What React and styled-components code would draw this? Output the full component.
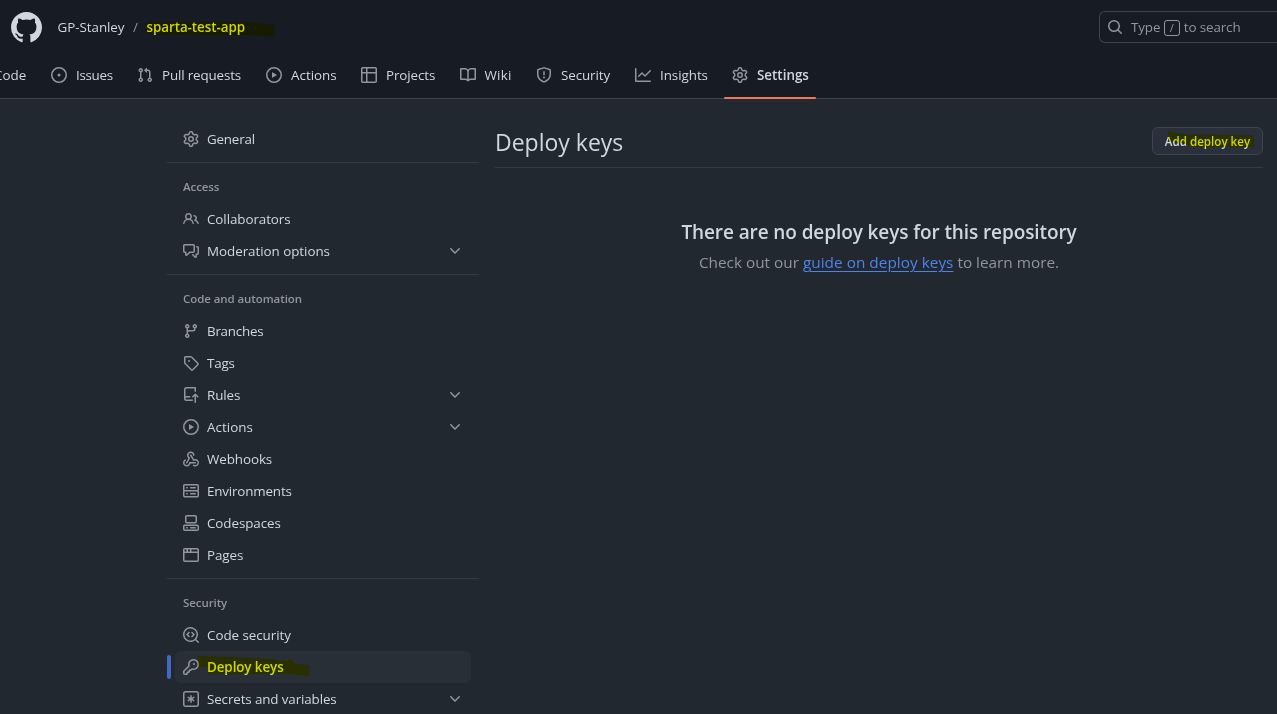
import React from 'react';
import styled, { createGlobalStyle, css } from 'styled-components';

const c = {
  header: '#171b23',
  page: '#212830',
  line: '#3d444d',
  lineMuted: '#343b44',
  text: '#d1d7e0',
  muted: '#9095a0',
  link: '#4f83ea',
  bar: '#4069c6',
  button: '#2a303b',
  active: '#292f37',
  underline: '#ec775c',
};

const Global = createGlobalStyle`
  *, *::before, *::after { box-sizing: border-box; }
  html, body { margin: 0; height: 100%; overflow: hidden; background: ${c.page}; }
  body {
    color: ${c.text};
    font-family: "Open Sans", "Noto Sans", sans-serif;
    font-size: 13.4px;
    line-height: 20px;
  }
  a { color: inherit; text-decoration: none; }
`;

const paths = {
  mark: 'M8 0c4.42 0 8 3.58 8 8a8.013 8.013 0 0 1-5.45 7.59c-.4.08-.55-.17-.55-.38 0-.27.01-1.13.01-2.2 0-.75-.25-1.23-.54-1.48 1.78-.2 3.65-.88 3.65-3.95 0-.88-.31-1.59-.82-2.15.08-.2.36-1.02-.08-2.12 0 0-.67-.22-2.2.82-.64-.18-1.32-.27-2-.27-.68 0-1.36.09-2 .27-1.53-1.03-2.2-.82-2.2-.82-.44 1.1-.16 1.92-.08 2.12-.51.56-.82 1.28-.82 2.15 0 3.06 1.86 3.75 3.64 3.95-.23.2-.44.55-.51 1.07-.46.21-1.61.55-2.33-.66-.15-.24-.6-.83-1.23-.82-.67.01-.27.38.01.53.34.19.73.9.82 1.13.16.45.68 1.31 2.69.94 0 .67.01 1.3.01 1.49 0 .21-.15.45-.55.38A7.995 7.995 0 0 1 0 8c0-4.42 3.58-8 8-8Z',
  search: 'M10.68 11.74a6 6 0 0 1-7.922-8.982 6 6 0 0 1 8.982 7.922l3.04 3.04a.749.749 0 0 1-.326 1.275.749.749 0 0 1-.734-.215ZM11.5 7a4.499 4.499 0 1 0-8.997 0A4.499 4.499 0 0 0 11.5 7Z',
  issue: 'M8 9.5a1.5 1.5 0 1 0 0-3 1.5 1.5 0 0 0 0 3ZM8 0a8 8 0 1 1 0 16A8 8 0 0 1 8 0ZM1.5 8a6.5 6.5 0 1 0 13 0 6.5 6.5 0 0 0-13 0Z',
  pull: 'M1.5 3.25a2.25 2.25 0 1 1 3 2.122v5.256a2.251 2.251 0 1 1-1.5 0V5.372A2.25 2.25 0 0 1 1.5 3.25Zm5.677-.177L9.573.677A.25.25 0 0 1 10 .854V2.5h1A2.5 2.5 0 0 1 13.5 5v5.628a2.251 2.251 0 1 1-1.5 0V5a1 1 0 0 0-1-1h-1v1.646a.25.25 0 0 1-.427.177L7.177 3.427a.25.25 0 0 1 0-.354ZM3.75 2.5a.75.75 0 1 0 0 1.5.75.75 0 0 0 0-1.5Zm0 9.5a.75.75 0 1 0 0 1.5.75.75 0 0 0 0-1.5Zm8.25.75a.75.75 0 1 0 1.5 0 .75.75 0 0 0-1.5 0Z',
  play: 'M8 0a8 8 0 1 1 0 16A8 8 0 0 1 8 0ZM1.5 8a6.5 6.5 0 1 0 13 0 6.5 6.5 0 0 0-13 0Zm4.879-2.773 4.264 2.559a.25.25 0 0 1 0 .428l-4.264 2.559A.25.25 0 0 1 6 10.559V5.442a.25.25 0 0 1 .379-.215Z',
  table: 'M0 1.75C0 .784.784 0 1.75 0h12.5C15.216 0 16 .784 16 1.75v12.5A1.75 1.75 0 0 1 14.25 16H1.75A1.75 1.75 0 0 1 0 14.25ZM6.5 6.5v8h7.75a.25.25 0 0 0 .25-.25V6.5Zm8-1.5V1.75a.25.25 0 0 0-.25-.25H6.5V5Zm-13 1.5v7.75c0 .138.112.25.25.25H5v-8ZM5 5V1.5H1.75a.25.25 0 0 0-.25.25V5Z',
  book: 'M0 1.75A.75.75 0 0 1 .75 1h4.253c1.227 0 2.317.59 3 1.501A3.743 3.743 0 0 1 11.006 1h4.245a.75.75 0 0 1 .75.75v10.5a.75.75 0 0 1-.75.75h-4.507a2.25 2.25 0 0 0-1.591.659l-.622.621a.75.75 0 0 1-1.06 0l-.622-.621A2.25 2.25 0 0 0 5.258 13H.75a.75.75 0 0 1-.75-.75Zm7.251 10.324.004-5.073-.002-2.253A2.25 2.25 0 0 0 5.003 2.5H1.5v9h3.757a3.75 3.75 0 0 1 1.994.574ZM8.755 4.75l-.004 7.322a3.752 3.752 0 0 1 1.992-.572H14.5v-9h-3.495a2.25 2.25 0 0 0-2.25 2.25Z',
  shield: 'M7.467.133a1.748 1.748 0 0 1 1.066 0l5.25 1.68A1.75 1.75 0 0 1 15 3.48V7c0 1.566-.32 3.182-1.303 4.682-.983 1.498-2.585 2.813-5.032 3.855a1.697 1.697 0 0 1-1.33 0c-2.447-1.042-4.049-2.357-5.032-3.855C1.32 10.182 1 8.566 1 7V3.48a1.75 1.75 0 0 1 1.217-1.667Zm.61 1.429a.25.25 0 0 0-.153 0l-5.25 1.68a.25.25 0 0 0-.174.238V7c0 1.358.275 2.666 1.057 3.86.784 1.194 2.121 2.34 4.366 3.297a.196.196 0 0 0 .154 0c2.245-.956 3.582-2.104 4.366-3.298C13.225 9.666 13.5 8.36 13.5 7V3.48a.251.251 0 0 0-.174-.237l-5.25-1.68ZM8.75 4.75v3a.75.75 0 0 1-1.5 0v-3a.75.75 0 0 1 1.5 0ZM9 10.5a1 1 0 1 1-2 0 1 1 0 0 1 2 0Z',
  graph: 'M1.5 1.75V13.5h13.75a.75.75 0 0 1 0 1.5H.75a.75.75 0 0 1-.75-.75V1.75a.75.75 0 0 1 1.5 0Zm14.28 2.53-5.25 5.25a.75.75 0 0 1-1.06 0L7 7.06 4.28 9.78a.751.751 0 0 1-1.042-.018.751.751 0 0 1-.018-1.042l3.25-3.25a.75.75 0 0 1 1.06 0L10 7.94l4.72-4.72a.751.751 0 0 1 1.042.018.751.751 0 0 1 .018 1.042Z',
  gear: 'M8 0a8.2 8.2 0 0 1 .701.031C9.444.095 9.99.645 10.16 1.29l.288 1.107c.018.066.079.158.212.224.231.114.454.243.668.386.123.082.233.09.299.071l1.103-.303c.644-.176 1.392.021 1.82.63.27.385.506.792.704 1.218.315.675.111 1.422-.364 1.891l-.814.806c-.049.048-.098.147-.088.294.016.257.016.515 0 .772-.01.147.038.246.088.294l.814.806c.475.469.679 1.216.364 1.891a7.977 7.977 0 0 1-.704 1.217c-.428.61-1.176.807-1.82.63l-1.102-.302c-.067-.019-.177-.011-.3.071a5.909 5.909 0 0 1-.668.386c-.133.066-.194.158-.211.224l-.29 1.106c-.168.646-.715 1.196-1.458 1.26a8.006 8.006 0 0 1-1.402 0c-.743-.064-1.289-.614-1.458-1.26l-.289-1.106c-.018-.066-.079-.158-.212-.224a5.738 5.738 0 0 1-.668-.386c-.123-.082-.233-.09-.299-.071l-1.103.303c-.644.176-1.392-.021-1.82-.63a8.12 8.12 0 0 1-.704-1.218c-.315-.675-.111-1.422.363-1.891l.815-.806c.05-.048.098-.147.088-.294a6.214 6.214 0 0 1 0-.772c.01-.147-.038-.246-.088-.294l-.815-.806C.635 6.045.431 5.298.746 4.623a7.92 7.92 0 0 1 .704-1.217c.428-.61 1.176-.807 1.82-.63l1.102.302c.067.019.177.011.3-.071.214-.143.437-.272.668-.386.133-.066.194-.158.211-.224l.29-1.106C6.009.645 6.556.095 7.299.03 7.53.01 7.764 0 8 0Zm-.571 1.525c-.036.003-.108.036-.137.146l-.289 1.105c-.147.561-.549.967-.998 1.189-.173.086-.34.183-.5.29-.417.278-.97.423-1.529.27l-1.103-.303c-.109-.03-.175.016-.195.045-.22.312-.412.644-.573.99-.014.031-.021.11.059.19l.815.806c.411.406.562.957.53 1.456a4.709 4.709 0 0 0 0 .582c.032.499-.119 1.05-.53 1.456l-.815.806c-.081.08-.073.159-.059.19.162.346.353.677.573.989.02.03.085.076.195.046l1.102-.303c.56-.153 1.113-.008 1.53.27.161.107.328.204.501.29.447.222.85.629.997 1.189l.289 1.105c.029.109.101.143.137.146a6.6 6.6 0 0 0 1.142 0c.036-.003.108-.036.137-.146l.289-1.105c.147-.561.549-.967.998-1.189.173-.086.34-.183.5-.29.417-.278.97-.423 1.529-.27l1.103.303c.109.029.175-.016.195-.045.22-.313.411-.644.573-.99.014-.031.021-.11-.059-.19l-.815-.806c-.411-.406-.562-.957-.53-1.456a4.709 4.709 0 0 0 0-.582c-.032-.499.119-1.05.53-1.456l.815-.806c.081-.08.073-.159.059-.19a6.464 6.464 0 0 0-.573-.989c-.02-.03-.085-.076-.195-.046l-1.102.303c-.56.153-1.113.008-1.53-.27a4.44 4.44 0 0 0-.501-.29c-.447-.222-.85-.629-.997-1.189l-.289-1.105c-.029-.11-.101-.143-.137-.146a6.6 6.6 0 0 0-1.142 0ZM11 8a3 3 0 1 1-6 0 3 3 0 0 1 6 0ZM9.5 8a1.5 1.5 0 1 0-3.001.001A1.5 1.5 0 0 0 9.5 8Z',
  people: 'M2 5.5a3.5 3.5 0 1 1 5.898 2.549 5.508 5.508 0 0 1 3.034 4.084.75.75 0 1 1-1.482.235 4 4 0 0 0-7.9 0 .75.75 0 0 1-1.482-.236A5.507 5.507 0 0 1 3.102 8.05 3.493 3.493 0 0 1 2 5.5ZM11 4a3.001 3.001 0 0 1 2.22 5.018 5.01 5.01 0 0 1 2.56 3.012.749.749 0 0 1-.885.954.752.752 0 0 1-.549-.514 3.507 3.507 0 0 0-2.522-2.372.75.75 0 0 1-.574-.73v-.352a.75.75 0 0 1 .416-.672A1.5 1.5 0 0 0 11 5.5.75.75 0 0 1 11 4Zm-5.5-.5a2 2 0 1 0-.001 3.999A2 2 0 0 0 5.5 3.5Z',
  comments: 'M1.75 1h8.5c.966 0 1.75.784 1.75 1.75v5.5A1.75 1.75 0 0 1 10.25 10H7.061l-2.574 2.573A1.458 1.458 0 0 1 2 11.543V10h-.25A1.75 1.75 0 0 1 0 8.25v-5.5C0 1.784.784 1 1.75 1ZM1.5 2.75v5.5c0 .138.112.25.25.25h1a.75.75 0 0 1 .75.75v2.19l2.72-2.72a.749.749 0 0 1 .53-.22h3.5a.25.25 0 0 0 .25-.25v-5.5a.25.25 0 0 0-.25-.25h-8.5a.25.25 0 0 0-.25.25Zm13 2a.25.25 0 0 0-.25-.25h-.5a.75.75 0 0 1 0-1.5h.5c.966 0 1.75.784 1.75 1.75v5.5A1.75 1.75 0 0 1 14.25 12H14v1.543a1.458 1.458 0 0 1-2.487 1.03L9.22 12.28a.749.749 0 0 1 .326-1.275.749.749 0 0 1 .734.215l2.22 2.22v-2.19a.75.75 0 0 1 .75-.75h1a.25.25 0 0 0 .25-.25Z',
  branch: 'M9.5 3.25a2.25 2.25 0 1 1 3 2.122V6A2.5 2.5 0 0 1 10 8.5H6a1 1 0 0 0-1 1v1.128a2.251 2.251 0 1 1-1.5 0V5.372a2.25 2.25 0 1 1 1.5 0v1.836A2.493 2.493 0 0 1 6 7h4a1 1 0 0 0 1-1v-.628A2.25 2.25 0 0 1 9.5 3.25Zm-6 0a.75.75 0 1 0 1.5 0 .75.75 0 0 0-1.5 0Zm8.25-.75a.75.75 0 1 0 0 1.5.75.75 0 0 0 0-1.5ZM4.25 12a.75.75 0 1 0 0 1.5.75.75 0 0 0 0-1.5Z',
  tag: 'M1 7.775V2.75C1 1.784 1.784 1 2.75 1h5.025c.464 0 .91.184 1.238.513l6.25 6.25a1.75 1.75 0 0 1 0 2.474l-5.026 5.026a1.75 1.75 0 0 1-2.474 0l-6.25-6.25A1.752 1.752 0 0 1 1 7.775Zm1.5 0c0 .066.026.13.073.177l6.25 6.25a.25.25 0 0 0 .354 0l5.025-5.025a.25.25 0 0 0 0-.354l-6.25-6.25a.25.25 0 0 0-.177-.073H2.75a.25.25 0 0 0-.25.25ZM6 5a1 1 0 1 1 0 2 1 1 0 0 1 0-2Z',
  push: 'M1 2.5A2.5 2.5 0 0 1 3.5 0h8.75a.75.75 0 0 1 .75.75v3.5a.75.75 0 0 1-1.5 0V1.5h-8a1 1 0 0 0-1 1v6.708A2.493 2.493 0 0 1 3.5 9h3.25a.75.75 0 0 1 0 1.5H3.5a1 1 0 0 0 0 2h5.75a.75.75 0 0 1 0 1.5H3.5A2.5 2.5 0 0 1 1 11.5Zm13.23 7.79h-.001l-1.224-1.224v6.184a.75.75 0 0 1-1.5 0V9.066L10.28 10.29a.75.75 0 0 1-1.06-1.061l2.505-2.504a.75.75 0 0 1 1.06 0L15.29 9.23a.751.751 0 0 1-.018 1.042.751.751 0 0 1-1.042.018Z',
  webhook: 'M5.5 4.25a2.25 2.25 0 0 1 4.5 0 .75.75 0 0 0 1.5 0 3.75 3.75 0 1 0-6.14 2.889l-2.272 4.258a.75.75 0 0 0 1.324.706L7 7.25a.75.75 0 0 0-.309-1.015A2.25 2.25 0 0 1 5.5 4.25ZM7.364 3.607a.75.75 0 0 1 1.03.257l2.608 4.349a3.75 3.75 0 1 1-.628 6.785.75.75 0 0 1 .752-1.299 2.25 2.25 0 1 0-.033-3.88.75.75 0 0 1-1.03-.256L7.107 4.636a.75.75 0 0 1 .257-1.03ZM2.9 8.776A.75.75 0 0 1 2.625 9.8 2.25 2.25 0 1 0 6 11.75a.75.75 0 0 1 .75-.751h5.5a.75.75 0 0 1 0 1.5H7.425a3.751 3.751 0 1 1-5.55-3.998.75.75 0 0 1 1.024.274Z',
  server: 'M1.75 1h12.5c.966 0 1.75.784 1.75 1.75v4c0 .372-.116.717-.314 1 .198.283.314.628.314 1v4a1.75 1.75 0 0 1-1.75 1.75H1.75A1.75 1.75 0 0 1 0 12.75v-4c0-.358.109-.707.314-1a1.739 1.739 0 0 1-.314-1v-4C0 1.784.784 1 1.75 1ZM1.5 2.75v4c0 .138.112.25.25.25h12.5a.25.25 0 0 0 .25-.25v-4a.25.25 0 0 0-.25-.25H1.75a.25.25 0 0 0-.25.25Zm.25 5.75a.25.25 0 0 0-.25.25v4c0 .138.112.25.25.25h12.5a.25.25 0 0 0 .25-.25v-4a.25.25 0 0 0-.25-.25ZM7 4.75A.75.75 0 0 1 7.75 4h4.5a.75.75 0 0 1 0 1.5h-4.5A.75.75 0 0 1 7 4.75ZM7.75 10h4.5a.75.75 0 0 1 0 1.5h-4.5a.75.75 0 0 1 0-1.5ZM3 4.75A.75.75 0 0 1 3.75 4h.5a.75.75 0 0 1 0 1.5h-.5A.75.75 0 0 1 3 4.75ZM3.75 10h.5a.75.75 0 0 1 0 1.5h-.5a.75.75 0 0 1 0-1.5Z',
  codespaces: 'M0 11.25c0-.966.784-1.75 1.75-1.75h12.5c.966 0 1.75.784 1.75 1.75v3A1.75 1.75 0 0 1 14.25 16H1.75A1.75 1.75 0 0 1 0 14.25Zm2-9.5C2 .784 2.784 0 3.75 0h8.5C13.216 0 14 .784 14 1.75v5a1.75 1.75 0 0 1-1.75 1.75h-8.5A1.75 1.75 0 0 1 2 6.75Zm1.75-.25a.25.25 0 0 0-.25.25v5c0 .138.112.25.25.25h8.5a.25.25 0 0 0 .25-.25v-5a.25.25 0 0 0-.25-.25Zm-2 9.5a.25.25 0 0 0-.25.25v3c0 .138.112.25.25.25h12.5a.25.25 0 0 0 .25-.25v-3a.25.25 0 0 0-.25-.25ZM7 12.75a.75.75 0 0 1 .75-.75h4.5a.75.75 0 0 1 0 1.5h-4.5a.75.75 0 0 1-.75-.75Zm-4 0a.75.75 0 0 1 .75-.75h.5a.75.75 0 0 1 0 1.5h-.5a.75.75 0 0 1-.75-.75Z',
  browser: 'M0 2.75C0 1.784.784 1 1.75 1h12.5c.966 0 1.75.784 1.75 1.75v10.5A1.75 1.75 0 0 1 14.25 15H1.75A1.75 1.75 0 0 1 0 13.25ZM14.5 6h-13v7.25c0 .138.112.25.25.25h12.5a.25.25 0 0 0 .25-.25Zm-6-3.5v2h6V2.75a.25.25 0 0 0-.25-.25ZM5 2.5v2h2v-2Zm-3.25 0a.25.25 0 0 0-.25.25V4.5h2v-2Z',
  codescan: 'M8.47 4.97a.75.75 0 0 0 0 1.06L9.94 7.5 8.47 8.97a.75.75 0 1 0 1.06 1.06l2-2a.75.75 0 0 0 0-1.06l-2-2a.75.75 0 0 0-1.06 0ZM6.53 6.03a.75.75 0 0 0-1.06-1.06l-2 2a.75.75 0 0 0 0 1.06l2 2a.75.75 0 1 0 1.06-1.06L5.06 7.5l1.47-1.47ZM12.246 13.307a7.501 7.501 0 1 1 1.06-1.06l2.474 2.473a.749.749 0 0 1-.326 1.275.749.749 0 0 1-.734-.215ZM1.5 7.5a6.002 6.002 0 0 0 3.608 5.504 6.002 6.002 0 0 0 6.486-1.117.748.748 0 0 1 .292-.293A6 6 0 1 0 1.5 7.5Z',
  key: 'M10.5 0a5.499 5.499 0 1 1-1.288 10.848l-.932.932a.749.749 0 0 1-.53.22H7v.75a.749.749 0 0 1-.22.53l-.5.5a.749.749 0 0 1-.53.22H5v.75a.749.749 0 0 1-.22.53l-.5.5a.749.749 0 0 1-.53.22h-2A1.75 1.75 0 0 1 0 14.25v-2c0-.199.079-.389.22-.53l4.932-4.932A5.5 5.5 0 0 1 10.5 0Zm-4 5.5c-.001.431.069.86.205 1.269a.75.75 0 0 1-.181.768L1.5 12.56v1.69c0 .138.112.25.25.25h1.69l.06-.06v-1.19a.75.75 0 0 1 .75-.75h1.19l.06-.06v-1.19a.75.75 0 0 1 .75-.75h1.19l1.023-1.025a.75.75 0 0 1 .768-.18A4 4 0 1 0 6.5 5.5ZM11 6a1 1 0 1 1 0-2 1 1 0 0 1 0 2Z',
  asterisk: 'M0 2.75A2.75 2.75 0 0 1 2.75 0h10.5A2.75 2.75 0 0 1 16 2.75v10.5A2.75 2.75 0 0 1 13.25 16H2.75A2.75 2.75 0 0 1 0 13.25ZM2.75 1.5c-.69 0-1.25.56-1.25 1.25v10.5c0 .69.56 1.25 1.25 1.25h10.5c.69 0 1.25-.56 1.25-1.25V2.75c0-.69-.56-1.25-1.25-1.25ZM8 4a.75.75 0 0 1 .75.75V6.7l1.69-.975a.75.75 0 0 1 .75 1.3L9.5 8l1.69.976a.75.75 0 0 1-.75 1.298L8.75 9.3v1.951a.75.75 0 0 1-1.5 0V9.299l-1.69.976a.75.75 0 0 1-.75-1.3L6.5 8l-1.69-.975a.75.75 0 0 1 .75-1.3l1.69.976V4.75A.75.75 0 0 1 8 4Z',
  chevron: 'M12.78 5.22a.749.749 0 0 1 0 1.06l-4.25 4.25a.749.749 0 0 1-1.06 0L3.22 6.28a.749.749 0 1 1 1.06-1.06L8 8.939l3.72-3.719a.749.749 0 0 1 1.06 0Z',
};

const Svg = styled.svg`
  flex: none;
  display: block;
  fill: ${(p) => (p.$bright ? c.text : c.muted)};
`;

function Icon({ name, size = 16, bright }) {
  return (
    <Svg viewBox="0 0 16 16" width={size} height={size} $bright={bright} aria-hidden="true">
      <path fillRule="evenodd" d={paths[name]} />
    </Svg>
  );
}

/* Yellow marker strokes drawn across a label */
const Marked = styled.span`
  position: relative;
  font-weight: 600;
`;
const Stroke = styled.svg`
  position: absolute;
  left: ${(p) => p.$x}px;
  top: ${(p) => p.$y}px;
  overflow: visible;
  mix-blend-mode: multiply;
  pointer-events: none;
  fill: #ffff00;
`;

function Marker({ x, y, points }) {
  return (
    <Stroke $x={x} $y={y} width="1" height="1" aria-hidden="true">
      <polygon points={points} />
    </Stroke>
  );
}

const Header = styled.header`
  height: 99px;
  background: ${c.header};
  border-bottom: 1px solid ${c.line};
`;
const TopBar = styled.div`
  display: flex;
  align-items: center;
  justify-content: space-between;
  height: 54px;
  padding-left: 11px;
`;
const Crumbs = styled.div`
  display: flex;
  align-items: center;
  letter-spacing: -0.06px;
`;
const Owner = styled.a`
  margin-left: 15.6px;
`;
const Slash = styled.span`
  width: 22px;
  text-align: center;
  color: ${c.muted};
`;
const SearchBox = styled.div`
  display: flex;
  align-items: center;
  width: 178px;
  height: 32px;
  padding-left: 7px;
  border: 1px solid ${c.line};
  border-right: 0;
  border-radius: 6px 0 0 6px;
  color: ${c.muted};
`;
const SearchText = styled.span`
  display: flex;
  align-items: center;
  margin-left: 8px;
  letter-spacing: -0.12px;
`;
const KeyCap = styled.kbd`
  display: flex;
  align-items: center;
  justify-content: center;
  width: 16px;
  height: 16px;
  margin: 1px 4px 0 3.5px;
  border: 1px solid ${c.muted};
  border-radius: 3px;
  font: 11px/14px "Open Sans", sans-serif;
`;

const Tabs = styled.nav`
  display: flex;
  gap: 8px;
  height: 45px;
  margin-left: -14px;
`;
const Tab = styled.a`
  position: relative;
  display: flex;
  flex: none;
  align-items: center;
  gap: 9px;
  height: 42px;
  padding: 0 8px;
  ${(p) =>
    p.$current &&
    css`
      font-weight: 600;
      &::after {
        content: '';
        position: absolute;
        left: 0;
        right: 0;
        bottom: -3px;
        height: 2px;
        border-radius: 1px;
        background: ${c.underline};
      }
    `}
`;
const TabLabel = styled.span`
  width: ${(p) => p.$w}px;
  white-space: nowrap;
  letter-spacing: ${(p) => p.$track || 0}px;
`;

const Body = styled.div`
  display: flex;
  gap: 16px;
  padding: 24px 14px 0 167px;
  height: 615px;
  overflow: hidden;
`;
const Sidebar = styled.aside`
  flex: none;
  width: 312px;
`;
const Group = styled.section`
  & + & {
    margin-top: 7px;
    border-top: 1px solid ${c.lineMuted};
  }
`;
const GroupTitle = styled.h3`
  height: 40px;
  margin: 0;
  padding: 15px 16px 0;
  color: ${c.muted};
  font-size: 11.5px;
  font-weight: 600;
  line-height: 18px;
  letter-spacing: -0.08px;
`;
const NavItem = styled.a`
  position: relative;
  display: flex;
  align-items: center;
  gap: 8px;
  height: 32px;
  margin: 0 8px;
  padding: 0 8px;
  border-radius: 6px;
  ${(p) =>
    p.$current &&
    css`
      background: ${c.active};
      &::before {
        content: '';
        position: absolute;
        left: -8px;
        top: 4px;
        width: 4px;
        height: 24px;
        border-radius: 2px;
        background: ${c.bar};
      }
    `}
`;
const NavLabel = styled.span`
  flex: 1;
  white-space: nowrap;
  letter-spacing: ${(p) => p.$track ?? -0.08}px;
`;

const Main = styled.main`
  flex: 1;
  min-width: 0;
`;
const PageHead = styled.div`
  display: flex;
  justify-content: space-between;
  align-items: flex-start;
  height: 45px;
  padding-top: 4px;
  border-bottom: 1px solid ${c.lineMuted};
`;
const Title = styled.h2`
  margin: -1px 0 0;
  font-size: 23px;
  font-weight: 400;
  line-height: 32px;
`;
const Button = styled.button`
  width: 111px;
  height: 28px;
  padding: 2px 0 0;
  border: 1px solid ${c.line};
  border-radius: 6px;
  background: ${c.button};
  color: ${c.text};
  font: 600 11.6px/20px "Open Sans", sans-serif;
  white-space: nowrap;
`;
const Blank = styled.div`
  padding-top: 49px;
  text-align: center;
`;
const BlankTitle = styled.h3`
  margin: 0;
  font-size: 19px;
  font-weight: 600;
  line-height: 30px;
  letter-spacing: -0.1px;
`;
const BlankText = styled.p`
  margin: 3px 0 0;
  color: ${c.muted};
  font-size: 15.33px;
  line-height: 24px;
`;
const Link = styled.a`
  color: ${c.link};
  letter-spacing: 0.03px;
  && { text-decoration: underline; }
  text-underline-offset: 3px;
`;

const tabs = [
  { icon: 'issue', label: 'Issues', w: 37, track: -0.3 },
  { icon: 'pull', label: 'Pull requests', w: 80, track: -0.15 },
  { icon: 'play', label: 'Actions', w: 46 },
  { icon: 'table', label: 'Projects', w: 49.5, track: -0.1 },
  { icon: 'book', label: 'Wiki', w: 27.5, track: 0.2 },
  { icon: 'shield', label: 'Security', w: 50, track: -0.1 },
  { icon: 'graph', label: 'Insights', w: 48, track: -0.05 },
  { icon: 'gear', label: 'Settings', w: 51, track: 0, current: true },
];

const groups = [
  { items: [{ icon: 'gear', label: 'General', track: -0.2 }] },
  {
    title: 'Access',
    items: [
      { icon: 'people', label: 'Collaborators' },
      { icon: 'comments', label: 'Moderation options', open: true, track: -0.04 },
    ],
  },
  {
    title: 'Code and automation',
    items: [
      { icon: 'branch', label: 'Branches', track: -0.25 },
      { icon: 'tag', label: 'Tags', track: -0.2 },
      { icon: 'push', label: 'Rules', open: true, track: -0.1 },
      { icon: 'play', label: 'Actions', open: true, track: 0.05 },
      { icon: 'webhook', label: 'Webhooks' },
      { icon: 'server', label: 'Environments', track: -0.17 },
      { icon: 'codespaces', label: 'Codespaces' },
      { icon: 'browser', label: 'Pages', track: -0.1 },
    ],
  },
  {
    title: 'Security',
    items: [
      { icon: 'codescan', label: 'Code security', track: -0.05 },
      { icon: 'key', label: 'Deploy keys', current: true },
      { icon: 'asterisk', label: 'Secrets and variables', open: true, track: -0.12 },
    ],
  },
];

export default function App() {
  return (
    <>
      <Global />
      <Header>
        <TopBar>
          <Crumbs>
            <Icon name="mark" size={31} bright />
            <Owner href="#">GP-Stanley</Owner>
            <Slash>/</Slash>
            <Marked>
              sparta-test-app
              <Marker x={-0.5} y={-0.5} points="0,5 98,4.5 128.5,8 128.5,19.5 98,18 0,17" />
            </Marked>
          </Crumbs>
          <SearchBox>
            <Icon name="search" />
            <SearchText>
              Type
              <KeyCap>/</KeyCap>
              to search
            </SearchText>
          </SearchBox>
        </TopBar>
        <Tabs>
          <Tab href="#">
            <TabLabel $w={33}>Code</TabLabel>
          </Tab>
          {tabs.map((t) => (
            <Tab href="#" key={t.label} $current={t.current}>
              <Icon name={t.icon} />
              <TabLabel $w={t.w} $track={t.track}>{t.label}</TabLabel>
            </Tab>
          ))}
        </Tabs>
      </Header>
      <Body>
        <Sidebar>
          {groups.map((g, i) => (
            <Group key={i}>
              {g.title && <GroupTitle>{g.title}</GroupTitle>}
              {g.items.map((it) => (
                <NavItem href="#" key={it.label} $current={it.current}>
                  <Icon name={it.icon} />
                  <NavLabel $track={it.track}>
                    {it.current ? (
                      <Marked>
                        {it.label}
                        <Marker
                          x={-9.3}
                          y={-2}
                          points="0,0 29,.7 74,2.7 84,5 95,3.3 95.7,7.3 111.3,9.3 111.3,20.3 91,17.7 72,18.3 9.7,18 9.7,11.3 0,10.7"
                        />
                      </Marked>
                    ) : (
                      it.label
                    )}
                  </NavLabel>
                  {it.open && <Icon name="chevron" />}
                </NavItem>
              ))}
            </Group>
          ))}
        </Sidebar>
        <Main>
          <PageHead>
            <Title>Deploy keys</Title>
            <Button>
              <Marked>
                Add deploy key
                <Marker x={3} y={-4} points="0,0 7,2.7 14,3.7 28,4.3 86,5 86,16.7 28,16.7 0,10" />
              </Marked>
            </Button>
          </PageHead>
          <Blank>
            <BlankTitle>There are no deploy keys for this repository</BlankTitle>
            <BlankText>
              Check out our <Link href="#">guide on deploy keys</Link> to learn more.
            </BlankText>
          </Blank>
        </Main>
      </Body>
    </>
  );
}
